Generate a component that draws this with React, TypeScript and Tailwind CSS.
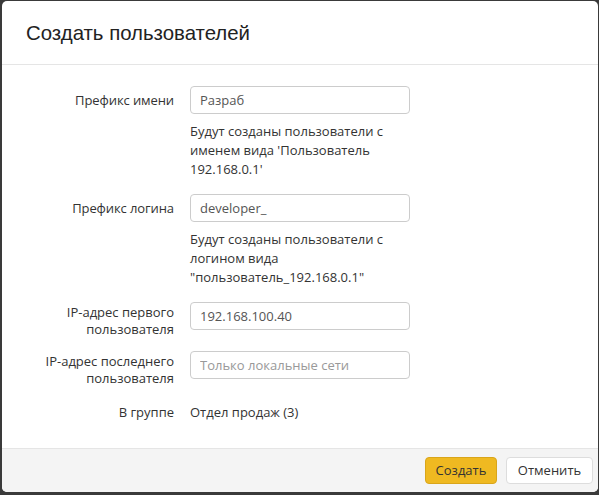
import React from 'react';

const rows = [
  { label: ['Префикс имени'], value: 'Разраб', help: "Будут созданы пользователи с именем вида 'Пользователь 192.168.0.1'" },
  { label: ['Префикс логина'], value: 'developer_', help: 'Будут созданы пользователи с логином вида "пользователь_192.168.0.1"' },
];

export default function App() {
  return (
    <div className="w-[599px] h-[495px] bg-[#3a3a3a] overflow-hidden pt-[1px] pl-[2px]">
      <div
        className="w-[596px] h-[491px] bg-white rounded-[5px] overflow-hidden flex flex-col text-[#333]"
        style={{ fontFamily: '"Open Sans", sans-serif' }}
      >
        <div className="h-[63px] flex items-center pl-[24px] border-b border-[#e5e5e5] box-content">
          <h1 className="text-[20.4px] leading-6 text-[#222]" style={{ fontFamily: '"Liberation Sans", Arial, sans-serif' }}>
            Создать пользователей
          </h1>
        </div>

        <div className="flex-1 pt-[21px] pl-[15px] text-[13px]">
          {rows.map((r, i) => (
            <div key={i} className="grid grid-cols-[157px_220px] gap-x-4 mb-[15px]">
              <div className="text-right pt-[5px] leading-[19px] tracking-[-0.1px]">{r.label[0]}</div>
              <div>
                <input
                  readOnly
                  value={r.value}
                  className="w-full h-[28px] border border-[#ccc] rounded-[4px] px-[9px] text-[#555] outline-none"
                />
                <p className="mt-[8px] leading-[19px]">{r.help}</p>
              </div>
            </div>
          ))}

          <div className="grid grid-cols-[157px_220px] gap-x-4 mb-[13px]">
            <div className="text-right pt-[2px] leading-[17px]">
              IP-адрес первого
              <br />
              пользователя
            </div>
            <input
              readOnly
              value="192.168.100.40"
              className="w-full h-[28px] border border-[#ccc] rounded-[4px] px-[9px] text-[#555] outline-none"
            />
          </div>

          <div className="grid grid-cols-[157px_220px] gap-x-4">
            <div className="text-right pt-[2px] leading-[17px]">
              IP-адрес последнего
              <br />
              пользователя
            </div>
            <input
              readOnly
              placeholder="Только локальные сети"
              className="w-full h-[28px] border border-[#ccc] rounded-[4px] px-[9px] text-[#555] placeholder:text-[#999] outline-none"
            />
          </div>

          <div className="grid grid-cols-[157px_220px] gap-x-4 mt-[16px] leading-[19px]">
            <div className="text-right">В группе</div>
            <div>Отдел продаж (3)</div>
          </div>
        </div>

        <div className="h-[43px] border-t border-[#e5e5e5] bg-[#f4f4f4] box-content flex items-center justify-end gap-[9px] pr-[5px] text-[13px]">
          <button className="w-[72px] h-[27px] rounded-[4px] bg-[#efb921] border border-[#d9a51a] text-[#333]">
            Создать
          </button>
          <button className="w-[87px] h-[27px] rounded-[4px] bg-white border border-[#ddd] text-[#333]">
            Отменить
          </button>
        </div>
      </div>
    </div>
  );
}
